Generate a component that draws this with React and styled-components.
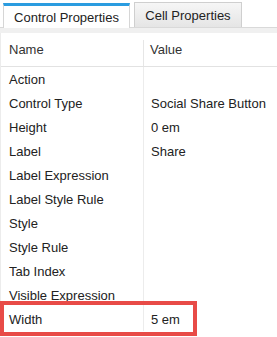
import React from 'react'
import styled, { createGlobalStyle } from 'styled-components'

const GlobalStyle = createGlobalStyle`
  body {
    margin: 0;
    background: #fff;
    font-family: "Liberation Sans", Arial, sans-serif;
    font-size: 13px;
    color: #222;
  }
`

const Panel = styled.div`
  width: 277px;
  height: 337px;
  overflow: hidden;
  background: #fff;
`

const TabStrip = styled.div`
  display: flex;
  align-items: flex-start;
  gap: 4px;
  height: 28px;
  padding-left: 3px;
  box-sizing: border-box;
  border-bottom: 1px solid #d9d9d9;
`

const Tab = styled.div`
  box-sizing: border-box;
  display: flex;
  align-items: center;
  justify-content: center;
  height: ${props => (props.active ? '25px' : '25px')};
  margin-top: ${props => (props.active ? '3px' : '2px')};
  width: ${props => props.width}px;
  background: ${props => (props.active ? '#fff' : 'linear-gradient(#f6f6f6, #e5e5e5)')};
  border: 1px solid ${props => (props.active ? '#d6d6d6' : '#cfcfcf')};
  border-top: ${props => (props.active ? '3px solid #2a9ce0' : '1px solid #cfcfcf')};
  border-bottom: none;
  padding-top: ${props => (props.active ? '0' : '1px')};
  color: #222;
  position: relative;
  z-index: ${props => (props.active ? 1 : 0)};
  ${props => props.active && 'height: 25px; margin-bottom: -1px;'}
`

const Band = styled.div`
  height: 5px;
  background: #f0f0f0;
`

const Grid = styled.div`
  display: grid;
  grid-template-columns: 142px 1fr;
  border-left: 1px solid #ececec;
`

const HeaderCell = styled.div`
  height: 34px;
  display: flex;
  align-items: center;
  box-sizing: border-box;
  border-bottom: 1px solid #e2e2e2;
  color: #333;
  padding-left: 8px;
`

const HeaderValue = styled(HeaderCell)`
  position: relative;
  padding-left: 7px;
  &::before {
    content: '';
    position: absolute;
    left: 0;
    top: 7px;
    bottom: 0;
    border-left: 1px solid #e6e6e6;
  }
`

const NameCell = styled.div`
  height: 24px;
  display: flex;
  align-items: center;
  padding-left: 8px;
  position: relative;
`

const ValueCell = styled.div`
  height: 24px;
  display: flex;
  align-items: center;
  padding-left: 7px;
  border-left: 1px solid #ececec;
`

const Highlight = styled.div`
  position: absolute;
  left: -1px;
  top: -6px;
  width: 197px;
  height: 35px;
  box-sizing: border-box;
  border: 4px solid #e84b47;
  pointer-events: none;
`

const rows = [
  ['Action', ''],
  ['Control Type', 'Social Share Button'],
  ['Height', '0 em'],
  ['Label', 'Share'],
  ['Label Expression', ''],
  ['Label Style Rule', ''],
  ['Style', ''],
  ['Style Rule', ''],
  ['Tab Index', ''],
  ['Visible Expression', ''],
  ['Width', '5 em', true],
]

export default function App() {
  return (
    <Panel>
      <GlobalStyle />
      <TabStrip>
        <Tab active width={127}>Control Properties</Tab>
        <Tab width={108}>Cell Properties</Tab>
      </TabStrip>
      <Band />
      <Grid>
        <HeaderCell>Name</HeaderCell>
        <HeaderValue>Value</HeaderValue>
        {rows.map(([name, value, marked]) => (
          <React.Fragment key={name}>
            <NameCell>
              {marked && <Highlight />}
              {name}
            </NameCell>
            <ValueCell>{value}</ValueCell>
          </React.Fragment>
        ))}
      </Grid>
    </Panel>
  )
}
